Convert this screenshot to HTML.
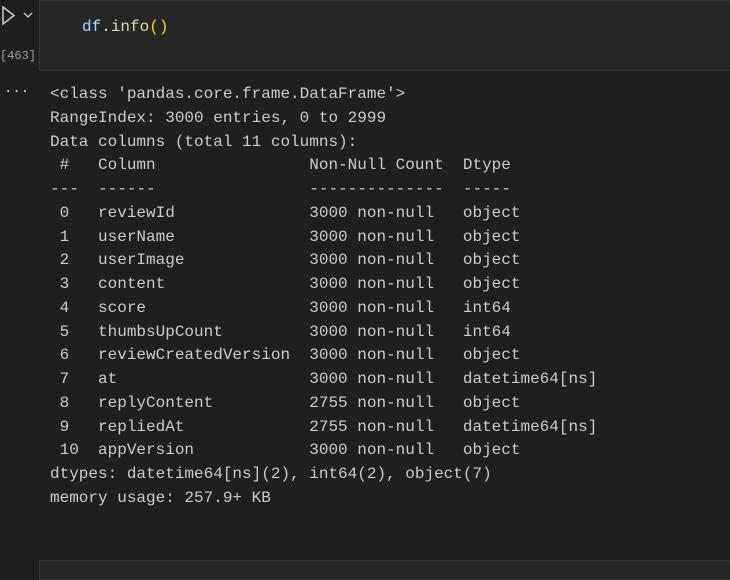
<!DOCTYPE html>
<html><head><style>
html,body{margin:0;padding:0;width:730px;height:569px;background:#1f1f1f;overflow:hidden;font-family:"Liberation Mono",monospace;}
.cell{position:absolute;left:39px;top:0;width:700px;height:71px;background:#262626;border:1px solid #373737;box-sizing:border-box;}
.code{position:absolute;left:82px;top:16px;font-size:16px;line-height:22px;color:#9cdcfe;}
.code .f{color:#dcdcaa}.code .p{color:#ffd700}.code .d{color:#d4d4d4}
.cnt{position:absolute;left:0px;top:49px;font-size:12px;color:#a0a0a0;}
.dots{position:absolute;left:4px;top:84px;font-size:14px;color:#cccccc;}
pre{position:absolute;left:50px;top:83px;margin:0;font-family:"Liberation Mono",monospace;font-size:16px;line-height:23.76px;color:#cccccc;}
.cell2{position:absolute;left:39px;top:560px;width:700px;height:20px;background:#262626;border:1px solid #373737;box-sizing:border-box;}
</style></head><body>
<svg style="position:absolute;left:0;top:5px" width="40" height="22"><path d="M3 2 L14 10.5 L3 19 Z" fill="none" stroke="#cccccc" stroke-width="1.5"/><path d="M24 8 L28 12 L32 8" fill="none" stroke="#cccccc" stroke-width="1.3"/></svg>
<div class="cell"></div>
<div class="code">df<span class="d">.</span><span class="f">info</span><span class="p">()</span></div>
<div class="cnt">[463]</div>
<div class="dots">···</div>
<pre>&lt;class 'pandas.core.frame.DataFrame'&gt;
RangeIndex: 3000 entries, 0 to 2999
Data columns (total 11 columns):
 #   Column                Non-Null Count  Dtype         
---  ------                --------------  -----         
 0   reviewId              3000 non-null   object        
 1   userName              3000 non-null   object        
 2   userImage             3000 non-null   object        
 3   content               3000 non-null   object        
 4   score                 3000 non-null   int64         
 5   thumbsUpCount         3000 non-null   int64         
 6   reviewCreatedVersion  3000 non-null   object        
 7   at                    3000 non-null   datetime64[ns]
 8   replyContent          2755 non-null   object        
 9   repliedAt             2755 non-null   datetime64[ns]
 10  appVersion            3000 non-null   object        
dtypes: datetime64[ns](2), int64(2), object(7)
memory usage: 257.9+ KB</pre>
<div class="cell2"></div>
</body></html>
